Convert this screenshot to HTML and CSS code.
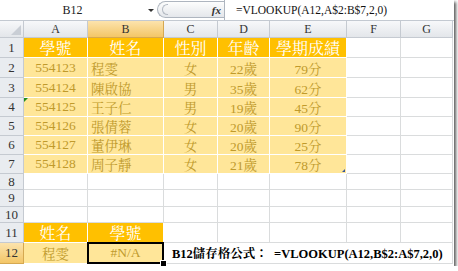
FILE: index.html
```html
<!DOCTYPE html>
<html lang="zh-Hant">
<head>
  <meta charset="UTF-8">
  <title>VLOOKUP</title>
  <link rel="stylesheet" href="styles.css">
</head>
<body>

  <div class="window">
    <div class="fbar">
      <div class="namebox">B12</div>
      <div class="nb-arrow"></div>
      <div class="fxbox"><span class="grip"></span><span class="fx">fx</span></div>
      <div class="formula">=VLOOKUP(A12,A$2:B$7,2,0)</div>
    </div>

    <div class="sheet">
      <div class="corner"><span class="tri"></span></div>
      <div class="hd">A</div>
      <div class="hd on">B</div>
      <div class="hd">C</div>
      <div class="hd">D</div>
      <div class="hd">E</div>
      <div class="hd">F</div>
      <div class="hd">G</div>

      <div class="rh">1</div>
      <div class="h">學號</div>
      <div class="h">姓名</div>
      <div class="h">性別</div>
      <div class="h">年齡</div>
      <div class="h">學期成績</div>
      <div></div>
      <div></div>

      <div class="rh">2</div>
      <div class="d">554123</div>
      <div class="d lft">程雯</div>
      <div class="d">女</div>
      <div class="d">22歲</div>
      <div class="d">79分</div>
      <div></div>
      <div></div>

      <div class="rh">3</div>
      <div class="d">554124</div>
      <div class="d lft">陳啟協</div>
      <div class="d">男</div>
      <div class="d">35歲</div>
      <div class="d">62分</div>
      <div></div>
      <div></div>

      <div class="rh">4</div>
      <div class="d err">554125</div>
      <div class="d lft">王子仁</div>
      <div class="d">男</div>
      <div class="d">19歲</div>
      <div class="d">45分</div>
      <div></div>
      <div></div>

      <div class="rh">5</div>
      <div class="d">554126</div>
      <div class="d lft">張倩蓉</div>
      <div class="d">女</div>
      <div class="d">20歲</div>
      <div class="d">90分</div>
      <div></div>
      <div></div>

      <div class="rh">6</div>
      <div class="d">554127</div>
      <div class="d lft">董伊琳</div>
      <div class="d">女</div>
      <div class="d">20歲</div>
      <div class="d">25分</div>
      <div></div>
      <div></div>

      <div class="rh">7</div>
      <div class="d">554128</div>
      <div class="d lft">周子靜</div>
      <div class="d">女</div>
      <div class="d">21歲</div>
      <div class="d resize">78分</div>
      <div></div>
      <div></div>

      <div class="rh">8</div>
      <div></div><div></div><div></div><div></div><div></div><div></div><div></div>

      <div class="rh">9</div>
      <div></div><div></div><div></div><div></div><div></div><div></div><div></div>

      <div class="rh">10</div>
      <div></div><div></div><div></div><div></div><div></div><div></div><div></div>

      <div class="rh">11</div>
      <div class="h">姓名</div>
      <div class="h">學號</div>
      <div></div><div></div><div></div><div></div><div></div>

      <div class="rh on">12</div>
      <div class="d">程雯</div>
      <div class="d active">#N/A<span class="handle"></span></div>
      <div class="note">B12儲存格公式：&nbsp; =VLOOKUP(A12,B$2:A$7,2,0)</div>
    </div>
  </div>

</body>
</html>
```

FILE: styles.css
```css
body {
  margin: 0;
  background: #fff;
  font-family: "Liberation Serif", "Noto Serif CJK TC", "Noto Sans CJK TC", serif;
}

.window {
  width: 454px;
  height: 266px;
  background: #fff;
  overflow: hidden;
  box-shadow: 2px 2px 3px rgba(0, 0, 0, 0.65);
}

/* formula bar */
.fbar {
  display: flex;
  height: 21px;
  box-sizing: border-box;
  border-bottom: 1px solid #c3c9d1;
  background: #fff;
}

.namebox {
  width: 145px;
  text-align: center;
  font-size: 12px;
  line-height: 20px;
  color: #222;
}

.nb-arrow {
  width: 12px;
  display: flex;
  align-items: center;
}

.nb-arrow::before {
  content: "";
  border-left: 3px solid transparent;
  border-right: 3px solid transparent;
  border-top: 3px solid #333;
  margin-left: 3px;
}

.fxbox {
  width: 67px;
  height: 17px;
  margin-top: 1px;
  box-sizing: border-box;
  border: 1px solid #aeb5bf;
  border-right: none;
  border-radius: 9px 0 0 9px;
  background: linear-gradient(#fdfdfd, #e4e7eb);
  display: flex;
  align-items: center;
  justify-content: space-between;
  padding: 0 3px 0 4px;
}

.grip {
  width: 6px;
  height: 11px;
  box-sizing: border-box;
  border: 1px solid #b3b9c2;
  border-right: none;
  border-radius: 6px 0 0 6px;
}

.fx {
  font-style: italic;
  font-weight: bold;
  font-size: 11px;
  color: #333;
}

.formula {
  flex: 1;
  border-left: 1px solid #aeb5bf;
  padding-left: 11px;
  font-size: 11.5px;
  line-height: 20px;
  color: #111;
}

/* grid */
.sheet {
  display: grid;
  grid-template-columns: 24px 64px 76px 54px 52px 77px 54px 52px;
  grid-template-rows: 17px 20px 20px 20px 19px 19px 19px 19px 16px 17px 16px 20px 21px;
}

.sheet > div {
  box-sizing: border-box;
  border-right: 1px solid #dadcdd;
  border-bottom: 1px solid #dadcdd;
  display: flex;
  align-items: center;
  justify-content: center;
  white-space: nowrap;
  position: relative;
}

.sheet > .corner,
.sheet > .hd,
.sheet > .rh {
  background: linear-gradient(#f7f8fa, #e3e6ea);
  border-color: #c5cad1;
  color: #333;
  font-size: 12px;
}

.sheet > .rh {
  background: #e9ecf0;
  font-size: 13px;
}

.sheet > .on {
  background: linear-gradient(#fce3ad, #f3c667);
  border-color: #d5a851;
}

.corner {
  justify-content: flex-end !important;
  align-items: flex-end !important;
}

.tri {
  width: 0;
  height: 0;
  border-left: 10px solid transparent;
  border-bottom: 10px solid #c9ced5;
  margin: 0 2px 2px 0;
}

.sheet > .h {
  background: #ffc000;
  border-color: #fff;
  color: #fff;
  font-size: 16px;
}

.sheet > .d {
  background: #ffe699;
  border-color: #fff;
  color: #c09a2c;
  font-size: 13.5px;
}

.sheet > .lft {
  justify-content: flex-start;
  padding-left: 3px;
}

.err::before {
  content: "";
  position: absolute;
  left: 0;
  top: 0;
  border-top: 4px solid #1e8c1e;
  border-right: 4px solid transparent;
}

.resize::after {
  content: "";
  position: absolute;
  right: 1px;
  bottom: 1px;
  border-bottom: 3px solid #35569a;
  border-left: 3px solid transparent;
}

.active::before {
  content: "";
  position: absolute;
  left: -1px;
  top: -1px;
  right: -1px;
  bottom: -1px;
  border: 2px solid #000;
}

.handle {
  position: absolute;
  right: -4px;
  bottom: -4px;
  width: 5px;
  height: 5px;
  background: #000;
  border: 1px solid #fff;
  z-index: 2;
}

.sheet > .note {
  grid-column: span 5;
  justify-content: flex-start;
  padding-left: 8px;
  font-weight: bold;
  font-size: 12.5px;
  color: #000;
}
```
